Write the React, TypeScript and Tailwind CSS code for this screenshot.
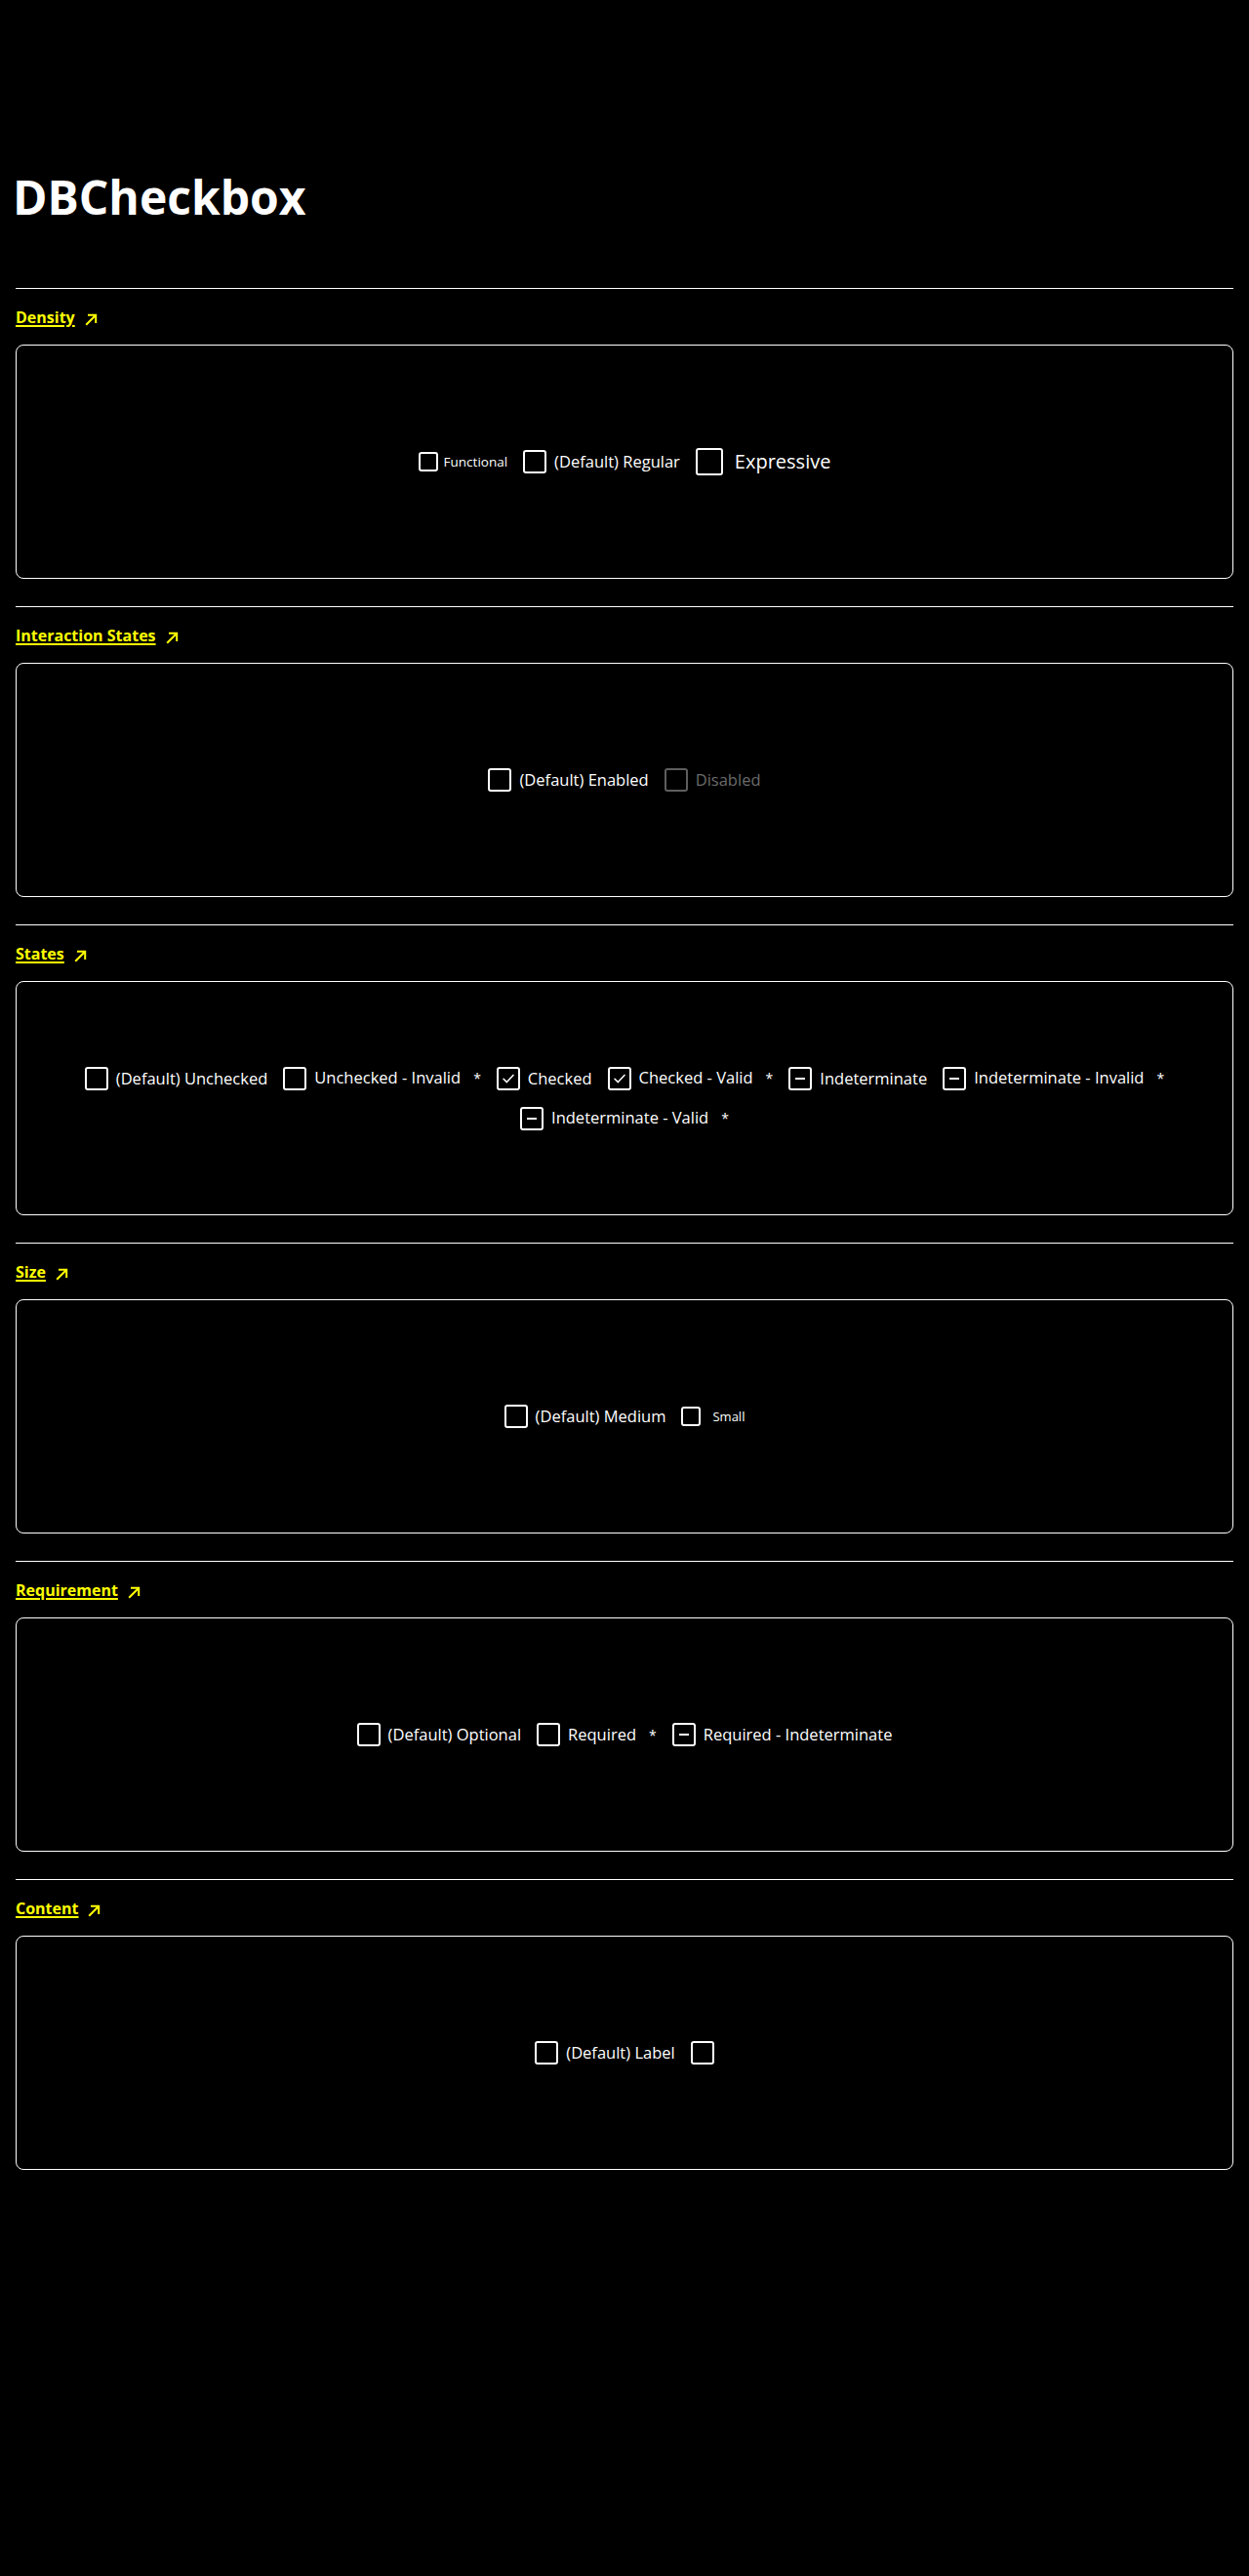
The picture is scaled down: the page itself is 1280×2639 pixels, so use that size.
import React from 'react';

type BoxState = 'unchecked' | 'checked' | 'indeterminate';
type Density = 'functional' | 'regular' | 'expressive' | 'small';

interface CheckItem {
  label?: string;
  state?: BoxState;
  required?: boolean;
  disabled?: boolean;
  size?: Density;
}

// sizes per density / size variant
const boxSize: Record<Density, string> = {
  functional: 'w-5 h-5',
  regular: 'w-6 h-6',
  expressive: 'w-7 h-7',
  small: 'w-5 h-5',
};

const textSize: Record<Density, string> = {
  functional: 'text-[13.5px]',
  regular: 'text-[16.5px]',
  expressive: 'text-[20px]',
  small: 'text-[13px]',
};

const labelGap: Record<Density, string> = {
  functional: 'gap-1.5',
  regular: 'gap-2',
  expressive: 'gap-3',
  small: 'gap-3',
};

const Checkbox: React.FC<CheckItem> = ({ label, state = 'unchecked', required, disabled, size = 'regular' }) => {
  return (
    <label className={`flex items-center ${labelGap[size]}`}>
      <span
        className={`flex items-center justify-center shrink-0 rounded-[3px] border-2 ${boxSize[size]} ${
          disabled ? 'border-[#5e5e5e]' : 'border-white'
        }`}
      >
        {state === 'checked' && (
          <svg width="14" height="14" viewBox="0 0 14 14" fill="none">
            <path d="M2 7.2 L5.4 10.6 L12 3.4" stroke="white" strokeWidth="1.5" strokeLinecap="round" strokeLinejoin="round" />
          </svg>
        )}
        {state === 'indeterminate' && <span className="block w-[10px] h-[2px] bg-white" />}
      </span>
      {label && (
        <span className={`${textSize[size]} leading-6 ${disabled ? 'text-[#6b6b6b]' : 'text-white'}`}>
          {label}
          {required && <span className="ml-[13px] text-[14px]">*</span>}
        </span>
      )}
    </label>
  );
};

const ArrowIcon = () => (
  <svg width="13" height="13" viewBox="0 0 13 13" fill="none" className="ml-[10px] mt-1">
    <path d="M1.2 11.8 L11.2 1.8" stroke="#ffff00" strokeWidth="2" />
    <path d="M3 1.8 H11.2 V10" stroke="#ffff00" strokeWidth="2" />
  </svg>
);

interface SectionProps {
  title: string;
  items: CheckItem[];
}

const Section: React.FC<SectionProps> = ({ title, items }) => (
  <section>
    <hr className="border-white" />
    <div className="mt-[17px] h-6 flex items-center">
      <a
        href="#"
        className="text-[16px] leading-6 font-bold text-[#ffff00] underline decoration-2 underline-offset-[2px]"
      >
        {title}
      </a>
      <ArrowIcon />
    </div>
    <div className="mt-4 mb-[28px] h-[240px] rounded-lg border border-white px-4 flex flex-wrap items-center content-center justify-center gap-x-4 gap-y-4">
      {items.map((item, i) => (
        <Checkbox key={i} {...item} />
      ))}
    </div>
  </section>
);

const sections: SectionProps[] = [
  {
    title: 'Density',
    items: [
      { label: 'Functional', size: 'functional' },
      { label: '(Default) Regular' },
      { label: 'Expressive', size: 'expressive' },
    ],
  },
  {
    title: 'Interaction States',
    items: [{ label: '(Default) Enabled' }, { label: 'Disabled', disabled: true }],
  },
  {
    title: 'States',
    items: [
      { label: '(Default) Unchecked' },
      { label: 'Unchecked - Invalid', required: true },
      { label: 'Checked', state: 'checked' },
      { label: 'Checked - Valid', state: 'checked', required: true },
      { label: 'Indeterminate', state: 'indeterminate' },
      { label: 'Indeterminate - Invalid', state: 'indeterminate', required: true },
      { label: 'Indeterminate - Valid', state: 'indeterminate', required: true },
    ],
  },
  {
    title: 'Size',
    items: [{ label: '(Default) Medium' }, { label: 'Small', size: 'small' }],
  },
  {
    title: 'Requirement',
    items: [
      { label: '(Default) Optional' },
      { label: 'Required', required: true },
      { label: 'Required - Indeterminate', state: 'indeterminate' },
    ],
  },
  {
    title: 'Content',
    items: [{ label: '(Default) Label' }, {}],
  },
];

export default function App() {
  return (
    <div className="min-h-[2639px] bg-black text-white font-['Open_Sans','Noto_Sans',sans-serif] px-4 pt-[170px]">
      <h1 className="text-[48px] leading-[64px] font-bold -ml-[3px]">DBCheckbox</h1>
      <div className="mt-[61px]">
        {sections.map((s) => (
          <Section key={s.title} {...s} />
        ))}
      </div>
    </div>
  );
}
